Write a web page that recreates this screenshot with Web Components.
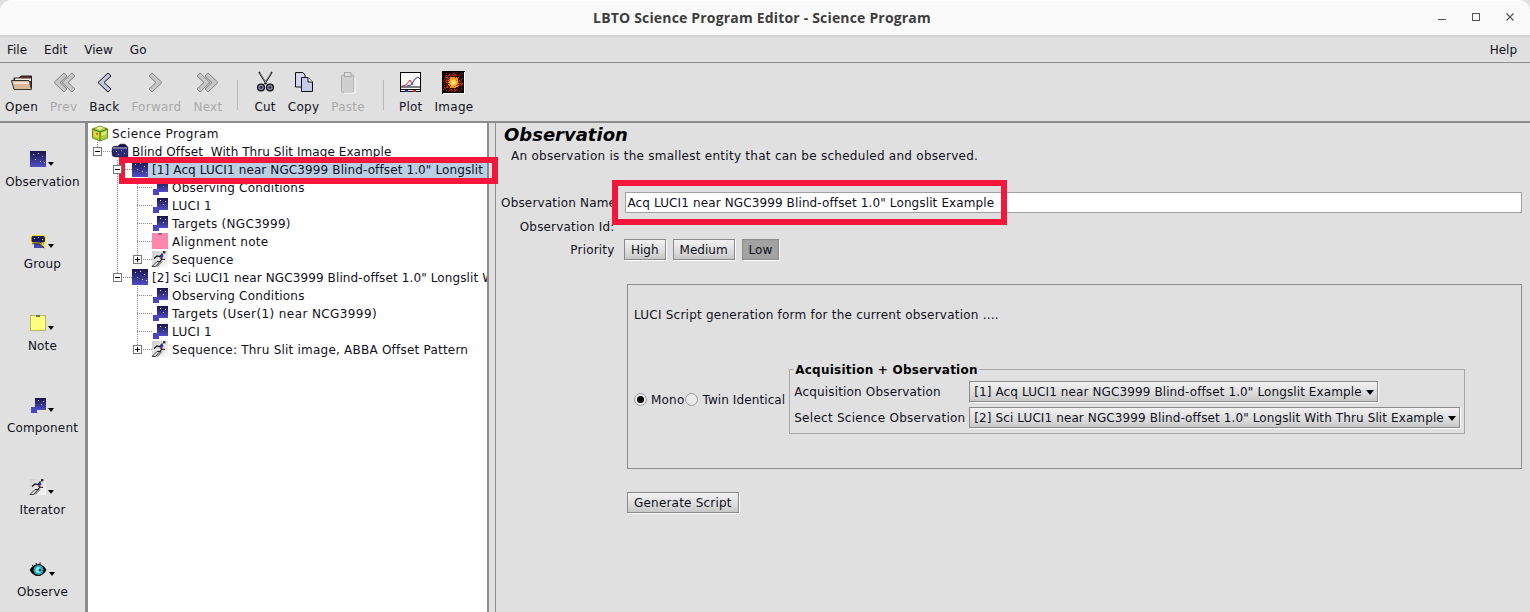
<!DOCTYPE html>
<html>
<head>
<meta charset="utf-8">
<title>LBTO Science Program Editor - Science Program</title>
<style>
  html, body { margin: 0; height: 100%; background: #fff; overflow: hidden; }
  body { font: 12px "DejaVu Sans", sans-serif; color: #10101c; }
</style>
</head>
<body>
<editor-window>
  <title-bar slot="title">LBTO Science Program Editor - Science Program</title-bar>
  <menu-bar slot="menu"></menu-bar>
  <tool-bar slot="tools"></tool-bar>
  <side-palette slot="palette"></side-palette>
  <tree-view slot="tree">
    <tree-row icon="program" style="--ls:.4px">Science Program</tree-row>
    <tree-row cols="e" toggle="-" icon="folder" style="--ls:.07px">Blind Offset  With Thru Slit Image Example</tree-row>
    <tree-row cols="_ t" toggle="-" icon="sky" selected style="--ls:.115px">[1] Acq LUCI1 near NGC3999 Blind-offset 1.0" Longslit Example</tree-row>
    <tree-row cols="_ | t" icon="comp">Observing Conditions</tree-row>
    <tree-row cols="_ | t" icon="comp" style="--ls:.3px">LUCI 1</tree-row>
    <tree-row cols="_ | t" icon="comp" style="--ls:.3px">Targets (NGC3999)</tree-row>
    <tree-row cols="_ | t" icon="pinknote" style="--ls:.3px">Alignment note</tree-row>
    <tree-row cols="_ | e" toggle="+" icon="runner" style="--ls:.3px">Sequence</tree-row>
    <tree-row cols="_ e" toggle="-" icon="sky" style="--ls:.115px">[2] Sci LUCI1 near NGC3999 Blind-offset 1.0" Longslit With Thru Slit Example</tree-row>
    <tree-row cols="_ _ t" icon="comp">Observing Conditions</tree-row>
    <tree-row cols="_ _ t" icon="comp" style="--ls:.4px">Targets (User(1) near NCG3999)</tree-row>
    <tree-row cols="_ _ t" icon="comp" style="--ls:.3px">LUCI 1</tree-row>
    <tree-row cols="_ _ e" toggle="+" icon="runner" style="--ls:.22px">Sequence: Thru Slit image, ABBA Offset Pattern</tree-row>
  </tree-view>
  <observation-form slot="form"></observation-form>
</editor-window>

<script>
// shared sky gradient, every svg carries its own copy with a unique id
let gradId = 0;
function sky(x, y, w, h) {
  const id = 'g' + (++gradId);
  return `<defs><linearGradient id="${id}" x1="0" y1="0" x2="0" y2="1"><stop offset="0" stop-color="#17144f"/><stop offset="1" stop-color="#4f4cc6"/></linearGradient></defs>
    <rect x="${x}" y="${y}" width="${w}" height="${h}" fill="url(#${id})"/>`;
}
function stars(list) {
  return list.map(p => `<rect x="${p[0]}" y="${p[1]}" width="1" height="1" fill="#fff"/>`).join('');
}
function runner() {
  const id = 'r' + (++gradId);
  return `<defs><linearGradient id="${id}" x1="0" y1="0" x2="1" y2="1"><stop offset="0" stop-color="#cfcfcf"/><stop offset="1" stop-color="#fafafa"/></linearGradient></defs>
    <rect x="0" y="0" width="16" height="16" fill="url(#${id})"/>
    <path d="M0 15.500L5 10.500H8L3.500 15.500M3.500 15.500H0M5 15.500L10 10.500" fill="none" stroke="#222" stroke-width=".9"/>
    <path d="M2 7.500L5 5L8 5.500L10.500 2.500M8 6L10 8L8 10.500L6 10.500M10 8L13 8.500" fill="none" stroke="#111" stroke-width="1.200"/>
    <path d="M7.500 6L10 3L11.500 5L9.500 8Z" fill="#2233dd"/>
    <rect x="11" y="0" width="2.400" height="2.400" fill="#333"/>
    <rect x="8" y="6" width="1.500" height="1.500" fill="#e22"/>`;
}
function nebula() {
  let dots = '';
  let seed = 7;
  for (let y = 1; y < 22; y += 1) {
    for (let x = 1; x < 22; x += 1) {
      seed = (seed * 137 + 51) % 251;
      const d = Math.hypot(x - 11, y - 11);
      if (seed % 100 < 90 - d * 6) {
        const c = d < 6 ? '#ff8a10' : seed % 3 === 0 ? '#c83808' : seed % 3 === 1 ? '#901c04' : '#5c1000';
        dots += `<rect x="${x}" y="${y}" width="1" height="1" fill="${c}"/>`;
      }
    }
  }
  const id = 'n' + (++gradId);
  return `<defs><radialGradient id="${id}"><stop offset="0" stop-color="#fffbd0"/><stop offset=".45" stop-color="#ffc030"/><stop offset="1" stop-color="#ff8000" stop-opacity="0"/></radialGradient></defs>
    <rect x="0" y="0" width="23" height="23" fill="#120404"/>${dots}
    <circle cx="11.500" cy="11.500" r="6" fill="url(#${id})"/>
    <path d="M0 .5H22M.5 0V22M0 21.500H22M21.500 0V22" stroke="#000" fill="none"/>
    <path d="M22.500 1V23M1 22.500H23" stroke="#fff" fill="none"/>`;
}
function chevron(dir, color, count) {
  // left pointing chevrons, flipped for forward
  let out = '';
  const active = color === '#c4c6e4';
  for (let i = count - 1; i >= 0; i--) {
    const o = i * 8;
    out += `<path d="M${o + 11} 1L${o + 1} 10.500L${o + 11} 20L${o + 14} 17L${o + 7} 10.500L${o + 14} 4Z" fill="${color}" stroke="${active ? '#111' : '#808080'}" stroke-width="1"/>
      <path d="M${o + 12} 20.500L${o + 15} 17.500" stroke="#fff" fill="none"/>`;
  }
  const w = count === 2 ? 22 : 14;
  return dir === 'r' ? `<g transform="translate(${w},0) scale(-1,1)">${out}</g>` : out;
}

const ICONS = {
  sky: { w: 16, h: 16, s: () => sky(0, 0, 16, 16) + stars([[3, 3], [8, 2], [12, 5], [5, 8], [10, 10], [14, 11]]) },
  comp: { w: 16, h: 15, s: () => sky(5, 0, 11, 12) + `<rect x="1" y="9" width="6" height="6" fill="#4a46c0"/>` + stars([[8, 2], [13, 3], [11, 6]]) },
  program: { w: 16, h: 17, s: () => `<path d="M8 1L15.500 4V13L8 16L.5 13V4Z" fill="#a6d43a" stroke="#6f8a20"/><path d="M.5 4L8 7L15.500 4M8 7V16" fill="none" stroke="#4d6a10"/><path d="M2 6L7 8V13L2 11Z" fill="#f2d040"/><path d="M9.500 8L14.500 6V9L9.500 11Z" fill="#d6f07a"/><rect x="4" y="8" width="2" height="2" fill="#d48010"/><path d="M4 3L8 1.500L12 3L8 5Z" fill="#e8f4a0"/>` },
  folder: { w: 16, h: 14, s: () => `<path d="M0 5Q0 2 3 2H6L8 0H13L16 3V13H3Q0 13 0 10Z" fill="#14124a" stroke="#666" stroke-width=".6"/>` + `<path d="M0 5H15L16 9L14 12H3Z" fill="#2c2a80"/><path d="M1 4H15" stroke="#d8d8e8"/>` + stars([[4, 7], [9, 6], [12, 9], [6, 10]]) },
  pinknote: { w: 16, h: 16, s: () => `<rect x="0" y="0" width="16" height="16" fill="#ff86ac"/><rect x="6" y="0" width="4" height="2" fill="#8a7078"/>` },
  runner: { w: 16, h: 16, s: runner },
  group: { w: 16, h: 14, s: () => `<path d="M4 7H14V13H4Z" fill="#4644b8"/><path d="M1 2.500Q1 .5 3.500 .5H13Q15.500 .5 15.500 3V6Q15.500 8 13 8H12L15 12.500L9.500 8H3.500Q1 8 1 6Z" fill="#1b1860" stroke="#f4e800" stroke-width="1.200"/><path d="M2 8.800H10L14.500 13" fill="none" stroke="#111" stroke-width=".7"/>` + stars([[4, 3], [8, 2], [12, 4]]) },
  note: { w: 16, h: 16, s: () => `<rect x=".5" y=".5" width="15" height="15" fill="#ffff80" stroke="#b8b860"/><rect x="6" y="0" width="4" height="2" fill="#707060"/>` },
  eye: { w: 18, h: 15, s: () => `<path d="M.5 8Q4 2 10 2Q15 3 17.500 8Q14 14 9 14Q4 14 .5 8Z" fill="#000"/><circle cx="9.500" cy="8" r="5" fill="#1fa8b4"/><circle cx="9.500" cy="8" r="3" fill="#8fe4e8"/><circle cx="11" cy="8" r="1.500" fill="#157"/><path d="M3 3L4.500 4.500M7 1L7.500 3M11 0.500L11 3" stroke="#000"/>` },
  open: { w: 21, h: 15, s: () => `<path d="M3 3H8L10 1H20.500V13H3Z" fill="#5a2c28" stroke="#222"/><path d="M4 3.500H20V6H4Z" fill="#f6f2ea"/><path d="M.5 5.500H18L20.500 14.500H3Z" fill="#d8b898" stroke="#333"/><path d="M2 7H18L18.500 9H3Z" fill="#f0e0d0"/>` },
  prev: { w: 22, h: 21, s: () => chevron('l', '#c8c8c8', 2) },
  back: { w: 14, h: 21, s: () => chevron('l', '#c4c6e4', 1) },
  forward: { w: 14, h: 21, s: () => chevron('r', '#c8c8c8', 1) },
  next: { w: 22, h: 21, s: () => chevron('r', '#c8c8c8', 2) },
  cut: { w: 17, h: 20, s: () => `<path d="M2 0L9.500 12M15 0L7.500 12" stroke="#222" stroke-width="1.600" fill="none"/><path d="M3 1L9.500 11M14 1L7.500 11" stroke="#eee" stroke-width=".5" fill="none"/><circle cx="4" cy="15.500" r="3.400" fill="#8888c0" stroke="#111" stroke-width="1.400"/><circle cx="13" cy="15.500" r="3.400" fill="#8888c0" stroke="#111" stroke-width="1.400"/><circle cx="4" cy="15.500" r="1.200" fill="#223"/><circle cx="13" cy="15.500" r="1.200" fill="#223"/>` },
  copy: { w: 18, h: 20, s: () => `<path d="M.5 .5H8L10 3V15H.5Z" fill="#d4d6ee" stroke="#111"/><path d="M6.500 5.500H13L17.500 10V19.500H6.500Z" fill="#c8cbe8" stroke="#111"/><path d="M13 5.500V10H17.500" fill="#fff" stroke="#111"/>` },
  paste: { w: 14, h: 21, s: () => `<rect x=".5" y="3" width="12.500" height="17.500" rx="2" fill="#cfcfcf" stroke="#a8a8a8"/><rect x="3.500" y=".5" width="6.500" height="4" fill="#dcdcdc" stroke="#a8a8a8"/><path d="M14 5V21H3" stroke="#fff" fill="none"/>` },
  plot: { w: 21, h: 20, s: () => `<rect x=".5" y=".5" width="20" height="19" fill="#fff" stroke="#000"/><path d="M2 14L6 13L10 8L13 13" fill="none" stroke="#e02020"/><path d="M7 14L11 13L15 7L18 5L20 7" fill="none" stroke="#2030e0"/><path d="M1 15H20M1 17.500H20" stroke="#000"/><rect x="5" y="18" width="3" height="2" fill="#2030e0"/><rect x="13" y="18" width="3" height="2" fill="#e02020"/>` },
  image: { w: 23, h: 23, s: nebula }
};

class UiIcon extends HTMLElement {
  connectedCallback() {
    const icon = ICONS[this.getAttribute('name')];
    this.attachShadow({ mode: 'open' });
    this.shadowRoot.innerHTML = `
      <style>
        :host { display: inline-block; line-height: 0; flex: none; white-space: normal; }
        svg { display: block; overflow: visible; }
      </style>
      <svg width="${icon.w}" height="${icon.h}" viewBox="0 0 ${icon.w} ${icon.h}">${icon.s()}</svg>`;
  }
}

class EditorWindow extends HTMLElement {
  constructor() {
    super();
    this.attachShadow({ mode: 'open' });
    this.shadowRoot.innerHTML = `
      <style>
        :host { display: flex; flex-direction: column; width: 1530px; height: 612px; background: #e0e0e0; position: relative; overflow: hidden; }
        .main { flex: 1; min-height: 0; display: flex; border-top: 2px solid #8c8c8c; }
        .left { width: 85px; flex: none; }
        .divider { width: 3px; flex: none; background: #8c8c8c; }
        .tree { width: 399px; flex: none; border-right: 2px solid #8c8c8c; overflow: hidden; }
        .split { width: 6px; flex: none; border-right: 1px solid #8c8c8c; }
        .form { flex: 1; min-width: 0; }
        /* the red call-outs lie over the screenshot content */
        .mark { position: absolute; border: 6px solid #f5163b; box-sizing: border-box; pointer-events: none; }
        .mark.a { left: 119px; top: 157px; width: 379px; height: 27px; }
        .mark.b { left: 612px; top: 180px; width: 395px; height: 45px; }
      </style>
      <slot name="title"></slot>
      <slot name="menu"></slot>
      <slot name="tools"></slot>
      <div class="main">
        <div class="left"><slot name="palette"></slot></div>
        <div class="divider"></div>
        <div class="tree"><slot name="tree"></slot></div>
        <div class="split"></div>
        <div class="form"><slot name="form"></slot></div>
      </div>
      <div class="mark a"></div>
      <div class="mark b"></div>`;
  }
}

class TitleBar extends HTMLElement {
  constructor() {
    super();
    this.attachShadow({ mode: 'open' });
    this.shadowRoot.innerHTML = `
      <style>
        :host { display: flex; align-items: center; height: 35px; background: #fafafa; border-bottom: 2px solid #d2d2d2; border-radius: 12px 12px 0 0; box-shadow: inset 0 1px 0 #fff; position: relative; }
        .text { flex: 1; text-align: center; font: bold 14px "Open Sans", sans-serif; letter-spacing: .18px; color: #3d3d3d; padding-right: 6px; }
        .btns { position: absolute; right: 16px; top: 13px; display: flex; gap: 26px; }
        svg { display: block; }
      </style>
      <div class="text"><slot></slot></div>
      <div class="btns">
        <svg width="8" height="9"><path d="M0 6.500H8" stroke="#555"/></svg>
        <svg width="8" height="9"><rect x=".5" y=".5" width="7" height="7" fill="none" stroke="#555"/></svg>
        <svg width="8" height="9"><path d="M.5 .5L7.500 7.500M7.500 .5L.5 7.500" stroke="#555" stroke-width="1.200"/></svg>
      </div>`;
  }
}

class MenuBar extends HTMLElement {
  constructor() {
    super();
    this.attachShadow({ mode: 'open' });
    this.shadowRoot.innerHTML = `
      <style>
        :host { display: flex; align-items: center; height: 25px; padding: 0 13px 0 7px; border-bottom: 1px solid #8c8c8c; background: #e0e0e0; }
        span { margin-right: 17px; }
        span:last-child { margin: 0 0 0 auto; }
      </style>
      <span>File</span><span>Edit</span><span>View</span><span>Go</span><span>Help</span>`;
  }
}

class ToolButton extends HTMLElement {
  constructor() {
    super();
    this.attachShadow({ mode: 'open' });
    this.shadowRoot.innerHTML = `
      <style>
        :host { display: flex; flex-direction: column; align-items: center; height: 44px; justify-content: space-between; letter-spacing: .25px; }
        :host([disabled]) { color: #aaa; }
        .ic { height: 24px; display: flex; align-items: center; justify-content: center; }
      </style>
      <div class="ic"><slot name="icon"></slot></div>
      <div><slot></slot></div>`;
  }
}

class ToolBar extends HTMLElement {
  constructor() {
    super();
    const tools = [
      ['open', 'Open'], ['prev', 'Prev', 1], ['back', 'Back'], ['forward', 'Forward', 1], ['next', 'Next', 1], '|',
      ['cut', 'Cut'], ['copy', 'Copy'], ['paste', 'Paste', 1], '|',
      ['plot', 'Plot'], ['image', 'Image']
    ];
    this.attachShadow({ mode: 'open' });
    this.shadowRoot.innerHTML = `
      <style>
        :host { display: flex; height: 58px; box-sizing: border-box; padding: 7px 0 0 5px; gap: 12px; align-items: flex-start; background: #e0e0e0; }
        i { width: 1px; height: 30px; background: #b8b8b8; margin: 10px 4px 0 3px; flex: none; }
        i:nth-of-type(2) { margin: 10px 3px 0 6px; }
      </style>
      ${tools.map(t => t === '|' ? '<i></i>' : `<tool-button ${t[2] ? 'disabled' : ''}><ui-icon slot="icon" name="${t[0]}"></ui-icon>${t[1]}</tool-button>`).join('')}`;
  }
}

class SidePalette extends HTMLElement {
  constructor() {
    super();
    const items = [['sky', 'Observation'], ['group', 'Group'], ['note', 'Note'], ['comp', 'Component'], ['runner', 'Iterator'], ['eye', 'Observe']];
    this.attachShadow({ mode: 'open' });
    this.shadowRoot.innerHTML = `
      <style>
        :host { display: flex; flex-direction: column; padding-top: 28px; letter-spacing: .15px; }
        .item { height: 82px; display: flex; flex-direction: column; align-items: center; gap: 8px; }
        .ic { height: 16px; display: flex; align-items: flex-end; }
        .ic::after { content: ""; border: 3px solid transparent; border-top: 4px solid #000; border-bottom: 0; margin: 0 2px 1px 2px; }
      </style>
      ${items.map(i => `<div class="item"><div class="ic"><ui-icon name="${i[0]}"></ui-icon></div><div>${i[1]}</div></div>`).join('')}`;
  }
}

class TreeView extends HTMLElement {
  constructor() {
    super();
    this.attachShadow({ mode: 'open' });
    this.shadowRoot.innerHTML = `
      <style>
        :host { display: block; height: 100%; background: #fff; padding: 1px 0 0 4px; box-sizing: border-box; overflow: hidden; }
      </style>
      <slot></slot>`;
  }
}

class TreeRow extends HTMLElement {
  connectedCallback() {
    const cols = (this.getAttribute('cols') || '').split(' ').filter(Boolean);
    const toggle = this.getAttribute('toggle');
    const dots = 'repeating-linear-gradient(#8a8a8a 0 1px, transparent 1px 2px)';
    const cells = cols.map((c, i) => {
      const last = i === cols.length - 1;
      const box = last && toggle ? `<b>${toggle === '+' ? '<u></u><s></s>' : '<u></u>'}</b>` : '';
      return `<span class="col ${c === '|' ? 'line' : c === 't' ? 'tee' : c === 'e' ? 'elbow' : ''}">${box}</span>`;
    }).join('');
    this.attachShadow({ mode: 'open' });
    this.shadowRoot.innerHTML = `
      <style>
        :host { display: flex; height: 18px; align-items: center; }
        .col { width: 20px; height: 18px; flex: none; position: relative; }
        .line::before, .tee::before, .elbow::before { content: ""; position: absolute; left: 5px; top: 0; width: 1px; background: ${dots}; }
        .line::before, .tee::before { height: 18px; }
        .elbow::before { height: 9px; }
        .tee::after, .elbow::after { content: ""; position: absolute; left: 5px; top: 9px; width: 15px; height: 1px; background: repeating-linear-gradient(90deg, #8a8a8a 0 1px, transparent 1px 2px); }
        b { position: absolute; left: 1px; top: 5px; width: 7px; height: 7px; border: 1px solid #777; background: #fff; z-index: 1; }
        u { position: absolute; left: 1px; top: 3px; width: 5px; height: 1px; background: #000; }
        s { position: absolute; left: 3px; top: 1px; width: 1px; height: 5px; background: #000; }
        .label { padding: 2px 2px 0 4px; height: 15px; line-height: 15px; white-space: pre; letter-spacing: var(--ls, .2px); }
        :host([selected]) .label { background: #b8cfe5; }
      </style>
      ${cells}<ui-icon name="${this.getAttribute('icon')}"></ui-icon><span class="label"><slot></slot></span>`;
  }
}

class PlainButton extends HTMLElement {
  constructor() {
    super();
    this.attachShadow({ mode: 'open' });
    this.shadowRoot.innerHTML = `
      <style>
        :host { display: inline-flex; align-items: center; height: 19px; padding: 0 6px; border: 1px solid #8a8a8a; box-shadow: 1px 1px 0 #fff; background: linear-gradient(#f2f2f2, #dcdcdc 60%, #c8c8c8); white-space: pre; }
        :host([pressed]) { background: #a2a2a2; }
      </style>
      <slot></slot>`;
  }
}

class ComboBox extends HTMLElement {
  constructor() {
    super();
    this.attachShadow({ mode: 'open' });
    this.shadowRoot.innerHTML = `
      <style>
        :host { display: flex; align-items: center; height: 19px; padding-left: 4px; border: 1px solid #8a8a8a; box-shadow: 1px 1px 0 #fff; background: linear-gradient(#f2f2f2, #dcdcdc 60%, #c8c8c8); white-space: pre; letter-spacing: .11px; }
        i { border: 4px solid transparent; border-top: 5px solid #000; border-bottom: 0; margin: 2px 3px 0 4px; }
      </style>
      <slot></slot><i></i>`;
  }
}

class ObservationForm extends HTMLElement {
  constructor() {
    super();
    this.attachShadow({ mode: 'open' });
    this.shadowRoot.innerHTML = `
      <style>
        :host { display: block; padding: 0 8px 0 8px; }
        h1 { font: italic bold 18px "DejaVu Sans", sans-serif; margin: 1px 0 0; color: #000; line-height: 22px; }
        .desc { margin: 0 0 0 7px; line-height: 20px; letter-spacing: .27px; }
        .grid { display: grid; grid-template-columns: 113.5px 1fr; grid-template-rows: 21px 20px 21px; margin: 26px 0 0 -3px; row-gap: 3px; align-items: center; letter-spacing: .18px; }
        .grid > label { text-align: right; white-space: pre; }
        .grid > label.low { padding-top: 1px; }
        .name { height: 21px; line-height: 20px; background: #fff; border: 1px solid #a0a0a0; margin-left: 10px; padding-left: 2px; box-sizing: border-box; letter-spacing: .12px; }
        .prio { display: flex; gap: 7px; margin-left: 9.500px; letter-spacing: 0; }
        .panel { margin: 24px 0 0 123px; height: 185px; box-sizing: border-box; border: 1px solid #8c8c8c; padding: 23px 6px 0; }
        .intro { letter-spacing: .23px; }
        .row { display: flex; align-items: center; margin-top: 47px; }
        .radio { display: inline-flex; align-items: center; gap: 4px; white-space: pre; margin-bottom: 4px; letter-spacing: .2px; margin-right: 1px; }
        .radio.twin { letter-spacing: .1px; margin-right: 0; }
        .dot { width: 11px; height: 11px; border: 1px solid #999; border-radius: 50%; background: #e8e8e8; position: relative; box-sizing: content-box; }
        .dot.on::after { content: ""; position: absolute; inset: 2px; border-radius: 50%; background: #000; }
        .group { margin-left: 4px; width: 676px; height: 65px; box-sizing: border-box; border: 1px solid #a8a8a8; padding: 11px 4px 0; position: relative; display: grid; grid-template-columns: 175px auto; row-gap: 5px; align-items: center; justify-items: start; align-content: start; }
        .legend { position: absolute; left: 4px; top: -7px; background: #e0e0e0; padding: 0 1px; font-weight: bold; color: #000; line-height: 14px; letter-spacing: .24px; }
        .acq { letter-spacing: .17px; }
        .sel { letter-spacing: .27px; white-space: pre; }
        .go { margin: 23px 0 0 123px; letter-spacing: .2px; }
      </style>
      <h1>Observation</h1>
      <div class="desc">An observation is the smallest entity that can be scheduled and observed.</div>
      <div class="grid">
        <label>Observation Name</label><div class="name">Acq LUCI1 near NGC3999 Blind-offset 1.0" Longslit Example</div>
        <label class="low">Observation Id:</label><div></div>
        <label class="low">Priority</label><div class="prio"><plain-button>High</plain-button><plain-button>Medium</plain-button><plain-button pressed>Low</plain-button></div>
      </div>
      <div class="panel">
        <div class="intro">LUCI Script generation form for the current observation ....</div>
        <div class="row">
          <span class="radio"><span class="dot on"></span>Mono</span>
          <span class="radio twin"><span class="dot"></span>Twin Identical</span>
          <div class="group">
            <span class="legend">Acquisition + Observation</span>
            <span class="acq">Acquisition Observation</span><combo-box>[1] Acq LUCI1 near NGC3999 Blind-offset 1.0" Longslit Example</combo-box>
            <span class="sel">Select Science Observation</span><combo-box>[2] Sci LUCI1 near NGC3999 Blind-offset 1.0" Longslit With Thru Slit Example</combo-box>
          </div>
        </div>
      </div>
      <div class="go"><plain-button>Generate Script</plain-button></div>`;
  }
}

customElements.define('ui-icon', UiIcon);
customElements.define('tool-button', ToolButton);
customElements.define('plain-button', PlainButton);
customElements.define('combo-box', ComboBox);
customElements.define('tree-row', TreeRow);
customElements.define('tree-view', TreeView);
customElements.define('title-bar', TitleBar);
customElements.define('menu-bar', MenuBar);
customElements.define('tool-bar', ToolBar);
customElements.define('side-palette', SidePalette);
customElements.define('observation-form', ObservationForm);
customElements.define('editor-window', EditorWindow);
</script>
</body>
</html>
